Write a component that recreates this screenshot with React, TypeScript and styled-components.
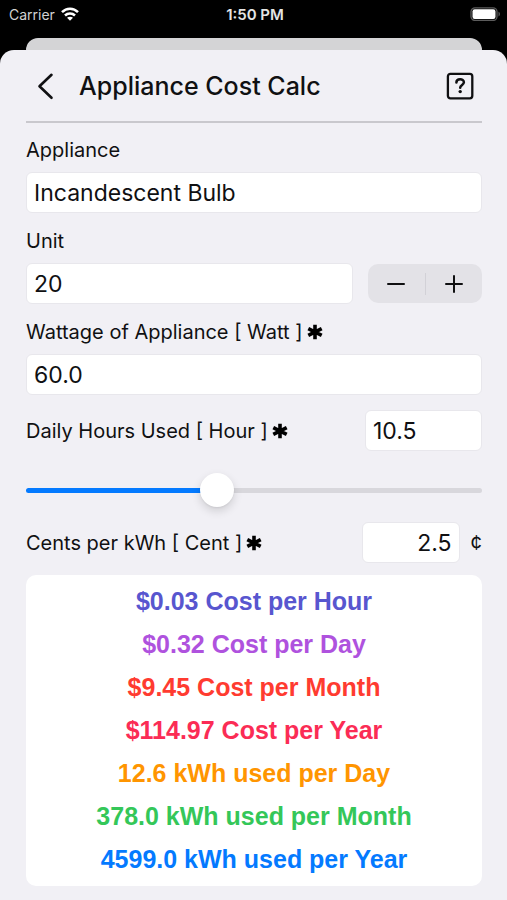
import React, { useState } from 'react';
import styled, { createGlobalStyle } from 'styled-components';

const GlobalStyle = createGlobalStyle`
  *, *::before, *::after { box-sizing: border-box; }
  body {
    margin: 0;
    background: #000;
    color: #101012;
    font-family: Inter, "Liberation Sans", sans-serif;
  }
  button, input { font: inherit; color: inherit; }
`;

const Screen = styled.div`
  min-height: 100vh;
  display: flex;
  flex-direction: column;
`;

const StatusBar = styled.header`
  display: grid;
  grid-template-columns: 1fr auto 1fr;
  align-items: center;
  height: 28px;
  margin-bottom: 10px;
  padding: 0 6px 0 9px;
  color: #e4e4e4;
`;

const Carrier = styled.span`
  display: flex;
  align-items: center;
  gap: 6px;
  font-size: 14px;
  color: #d2d2d2;
`;

const Clock = styled.time`
  font-size: 15px;
  font-weight: 600;
`;

const BatterySlot = styled.span`
  display: flex;
  justify-content: flex-end;
`;

const BackCard = styled.div`
  height: 12px;
  margin: 0 25px 0 26px;
  border-radius: 12px 12px 0 0;
  background: #d4d4d6;
`;

const Sheet = styled.main`
  flex: 1;
  display: flex;
  flex-direction: column;
  padding: 0 25px 15px 26px;
  border-radius: 14px 14px 0 0;
  background: #f1f0f5;
`;

const TitleBar = styled.div`
  display: flex;
  align-items: center;
  height: 73px;
  padding: 0 8px 0 10px;
  border-bottom: 2px solid #c9c8cd;
`;

const Title = styled.h1`
  flex: 1;
  margin: 0 0 0 23px;
  font-size: 25px;
  line-height: 32px;
  font-weight: 500;
`;

const IconButton = styled.button`
  display: flex;
  padding: 0;
  border: 0;
  background: none;
  cursor: pointer;
`;

const Form = styled.form`
  display: flex;
  flex-direction: column;
  gap: 15px;
  padding-top: 14px;
`;

const Field = styled.div`
  display: flex;
  flex-direction: column;
  gap: 9px;
`;

const Row = styled.div<{ $gap: number }>`
  display: flex;
  align-items: center;
  gap: ${(p) => p.$gap}px;
`;

const Label = styled.label`
  display: flex;
  flex: 1;
  align-items: center;
  gap: 4px;
  font-size: 20px;
  line-height: 26px;
  white-space: nowrap;
`;

const TextInput = styled.input<{ $width?: number; $align?: 'left' | 'right' }>`
  flex: ${(p) => (p.$width ? 'none' : '1 1 auto')};
  width: ${(p) => (p.$width ? `${p.$width}px` : '100%')};
  min-width: 0;
  height: 41px;
  padding: 0 7px;
  border: 1px solid #e8e7ec;
  border-radius: 6px;
  background: #fff;
  font-size: 23px;
  line-height: 30px;
  text-align: ${(p) => p.$align ?? 'left'};
`;

const Stepper = styled.div`
  display: flex;
  flex: none;
  align-items: center;
  width: 114px;
  height: 39px;
  border-radius: 10px;
  background: #e3e2e7;
`;

const StepButton = styled.button`
  display: flex;
  flex: 1;
  align-items: center;
  justify-content: center;
  height: 100%;
  padding: 0;
  border: 0;
  background: none;
  cursor: pointer;
`;

const StepDivider = styled.span`
  width: 1px;
  height: 22px;
  background: #d2d1d7;
`;

const Slider = styled.input`
  --stop: calc(17px + (100% - 34px) * var(--ratio));
  appearance: none;
  width: 100%;
  height: 34px;
  margin: 7px 0 0;
  background: transparent;

  &::-webkit-slider-runnable-track {
    height: 5px;
    border-radius: 3px;
    background: linear-gradient(to right, #047aff var(--stop), #d8d7dc var(--stop));
  }

  &::-webkit-slider-thumb {
    appearance: none;
    width: 34px;
    height: 34px;
    margin-top: -15px;
    border-radius: 50%;
    background: #fff;
    box-shadow: 0 4px 10px rgba(0, 0, 0, 0.14), 0 1px 2px rgba(0, 0, 0, 0.06);
  }
`;

const Currency = styled.span`
  font-size: 20px;
  line-height: 26px;
`;

const Results = styled.ul`
  margin: 12px 0 0;
  padding: 5px 0;
  border-radius: 10px;
  background: #fff;
  list-style: none;
`;

const Result = styled.li<{ $color: string }>`
  color: ${(p) => p.$color};
  font-family: "Liberation Sans", Arial, sans-serif;
  font-size: 25px;
  font-weight: 700;
  line-height: 43px;
  text-align: center;
  white-space: nowrap;
`;

const WifiIcon = () => (
  <svg width="18" height="14" viewBox="0 0 18 14" aria-hidden="true">
    <g fill="none" stroke="#fff" strokeWidth="2.5">
      <path d="M1 5.2C5.5.6 12.5.6 17 5.2" />
      <path d="M4 8.5C6.8 5.7 11.2 5.7 14 8.500" />
    </g>
    <path d="M9 13.800 6 10.800C7.700 9.300 10.300 9.300 12 10.800Z" fill="#fff" />
  </svg>
);

const BatteryIcon = () => (
  <svg width="31" height="14" viewBox="0 0 31 14" aria-hidden="true">
    <rect x="1" y=".8" width="26" height="12.6" rx="4" fill="none" stroke="#5c5c5c" strokeWidth="1.3" />
    <rect x="2.5" y="2.3" width="23" height="9.6" rx="2.2" fill="#fff" />
    <path d="M28.500 4.800C30.400 5.500 30.400 8.700 28.500 9.400Z" fill="#5c5c5c" />
  </svg>
);

const BackIcon = () => (
  <svg width="20" height="28" viewBox="0 0 20 28" aria-hidden="true">
    <path d="M15.500 2.800 3.500 14.300 15.500 25.800" fill="none" stroke="#101012" strokeWidth="2.600" strokeLinecap="round" strokeLinejoin="round" />
  </svg>
);

const HelpIcon = () => (
  <svg width="28" height="28" viewBox="0 0 28 28" aria-hidden="true" fill="none" stroke="#101012">
    <rect x="1.900" y="1.900" width="24.400" height="24.400" rx="2.500" strokeWidth="2.300" />
    <path d="M10.400 10.600C10.400 6.300 17.900 6.300 17.900 10.300C17.900 12.900 14.200 13 14.200 15.800" strokeWidth="2.500" strokeLinecap="round" />
    <circle cx="14.200" cy="19.600" r="1.700" fill="#101012" stroke="none" />
  </svg>
);

const RequiredIcon = () => (
  <svg width="16" height="16" viewBox="0 0 16 16" role="img" aria-label="required">
    <path d="M8 .8V15.200M1.300 4.600 14.700 11.400M1.300 11.400 14.700 4.600" stroke="#000" strokeWidth="3.600" />
  </svg>
);

const StepIcon = ({ plus = false }: { plus?: boolean }) => (
  <svg width="18" height="18" viewBox="0 0 18 18" aria-hidden="true">
    <path d={plus ? 'M1 9H17M9 1V17' : 'M1 9H17'} stroke="#101012" strokeWidth="2" strokeLinecap="round" />
  </svg>
);

const MIN_HOURS = 1;
const MAX_HOURS = 24;

const App = () => {
  const [appliance, setAppliance] = useState('Incandescent Bulb');
  const [unit, setUnit] = useState('20');
  const [watts, setWatts] = useState('60.0');
  const [hours, setHours] = useState('10.5');
  const [cents, setCents] = useState('2.5');

  const kw = (Number(unit) * Number(watts)) / 1000;
  const kwhDay = kw * Number(hours);
  const rate = Number(cents) / 100;
  const costDay = kwhDay * rate;
  const money = (n: number) => '$' + (Math.round(n * 1000) / 1000 + 1e-9).toFixed(2);
  const ratio = Math.min(1, Math.max(0, (Number(hours) - MIN_HOURS) / (MAX_HOURS - MIN_HOURS)));

  const results = [
    { color: '#5856cf', text: `${money(kw * rate)} Cost per Hour` },
    { color: '#af52de', text: `${money(costDay)} Cost per Day` },
    { color: '#ff3b30', text: `${money(costDay * 30)} Cost per Month` },
    { color: '#fb2c55', text: `$${(Math.floor(costDay * 36500) / 100).toFixed(2)} Cost per Year` },
    { color: '#ff9500', text: `${kwhDay.toFixed(1)} kWh used per Day` },
    { color: '#34c759', text: `${(kwhDay * 30).toFixed(1)} kWh used per Month` },
    { color: '#047aff', text: `${(kwhDay * 365).toFixed(1)} kWh used per Year` },
  ];

  const step = (by: number) => setUnit(String(Math.max(0, Number(unit) + by)));

  return (
    <Screen>
      <GlobalStyle />
      <StatusBar>
        <Carrier>Carrier <WifiIcon /></Carrier>
        <Clock>1:50 PM</Clock>
        <BatterySlot><BatteryIcon /></BatterySlot>
      </StatusBar>
      <BackCard />
      <Sheet>
        <TitleBar>
          <IconButton type="button" aria-label="Back"><BackIcon /></IconButton>
          <Title>Appliance Cost Calc</Title>
          <IconButton type="button" aria-label="Help"><HelpIcon /></IconButton>
        </TitleBar>
        <Form onSubmit={(e) => e.preventDefault()}>
          <Field>
            <Label htmlFor="appliance">Appliance</Label>
            <TextInput id="appliance" value={appliance} onChange={(e) => setAppliance(e.target.value)} />
          </Field>
          <Field>
            <Label htmlFor="unit">Unit</Label>
            <Row $gap={15}>
              <TextInput id="unit" inputMode="numeric" value={unit} onChange={(e) => setUnit(e.target.value)} />
              <Stepper>
                <StepButton type="button" aria-label="Decrease units" onClick={() => step(-1)}><StepIcon /></StepButton>
                <StepDivider />
                <StepButton type="button" aria-label="Increase units" onClick={() => step(1)}><StepIcon plus /></StepButton>
              </Stepper>
            </Row>
          </Field>
          <Field>
            <Label htmlFor="watts">Wattage of Appliance [ Watt ] <RequiredIcon /></Label>
            <TextInput id="watts" inputMode="decimal" value={watts} onChange={(e) => setWatts(e.target.value)} />
          </Field>
          <Row $gap={15}>
            <Label htmlFor="hours">Daily Hours Used [ Hour ] <RequiredIcon /></Label>
            <TextInput id="hours" inputMode="decimal" $width={117} value={hours} onChange={(e) => setHours(e.target.value)} />
          </Row>
          <Slider
            type="range"
            aria-label="Daily hours used"
            min={MIN_HOURS}
            max={MAX_HOURS}
            step={0.5}
            value={hours}
            onChange={(e) => setHours(e.target.value)}
            style={{ '--ratio': ratio } as React.CSSProperties}
          />
          <Row $gap={11}>
            <Label htmlFor="cents">Cents per kWh [ Cent ] <RequiredIcon /></Label>
            <TextInput id="cents" inputMode="decimal" $width={98} $align="right" value={cents} onChange={(e) => setCents(e.target.value)} />
            <Currency>¢</Currency>
          </Row>
        </Form>
        <Results>
          {results.map((r) => (
            <Result key={r.text} $color={r.color}>{r.text}</Result>
          ))}
        </Results>
      </Sheet>
    </Screen>
  );
};

export default App;
